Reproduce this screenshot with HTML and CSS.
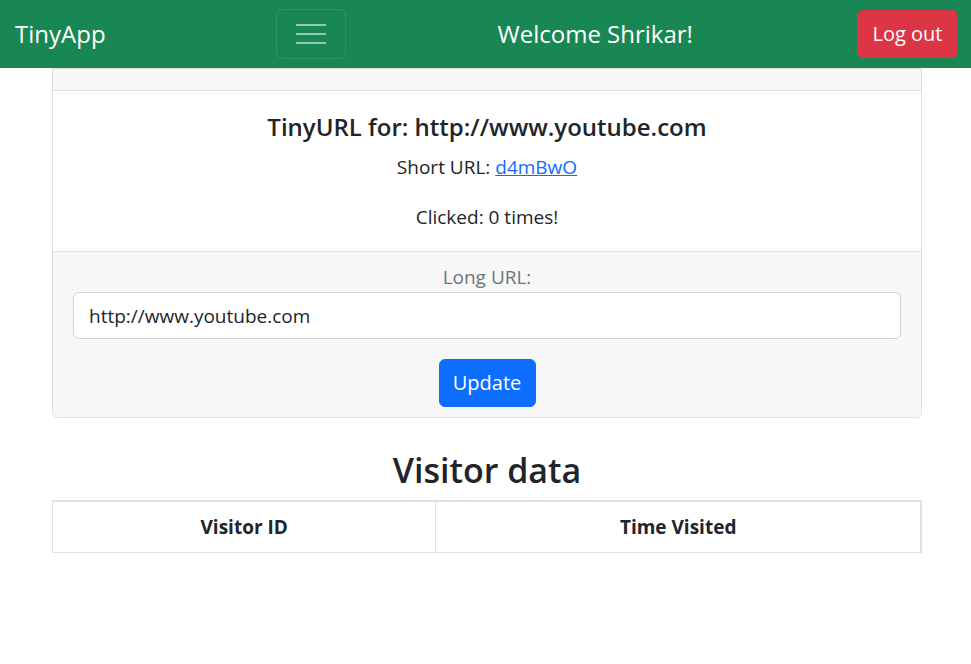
FILE: index.html
```html
<!DOCTYPE html>
<html lang="en">
<head>
<meta charset="utf-8">
<title>TinyApp</title>
<link rel="stylesheet" href="styles.css">
</head>
<body>
<nav class="navbar">
  <a class="brand" href="#">TinyApp</a>
  <button class="toggler" type="button" aria-label="Toggle navigation">
    <svg width="30" height="22" viewBox="0 0 30 22" aria-hidden="true">
      <path d="M0 2h30M0 11h30M0 20h30" stroke="rgba(255,255,255,0.55)" stroke-width="2.2" stroke-linecap="round"/>
    </svg>
  </button>
  <span class="welcome">Welcome Shrikar!</span>
  <button class="btn btn-danger" type="button">Log out</button>
</nav>

<main class="container">
  <section class="card">
    <div class="card-header"></div>
    <div class="card-body">
      <h5 class="card-title">TinyURL for: http://www.youtube.com</h5>
      <p class="card-text">Short URL: <a href="#">d4mBwO</a></p>
      <p class="card-text last">Clicked: 0 times!</p>
    </div>
    <form class="card-footer">
      <label class="form-label" for="longURL">Long URL:</label>
      <input class="form-control" id="longURL" type="text" value="http://www.youtube.com">
      <button class="btn btn-primary" type="button">Update</button>
    </form>
  </section>

  <h2 class="section-title">Visitor data</h2>
  <table class="table">
    <thead>
      <tr>
        <th class="col-id">Visitor ID</th>
        <th class="col-time">Time Visited</th>
      </tr>
    </thead>
  </table>
</main>
</body>
</html>
```
FILE: styles.css
```css
* { box-sizing: border-box; }

html, body {
  margin: 0;
  padding: 0;
  background: #fff;
}

body {
  font-family: "Open Sans", "Noto Sans", "Liberation Sans", sans-serif;
  font-size: 20px;
  line-height: 1.5;
  color: #212529;
}

.navbar {
  height: 68px;
  background: #198754;
  display: flex;
  align-items: center;
  justify-content: space-between;
  padding: 0 13px 0 15px;
}

.brand {
  color: #fff;
  text-decoration: none;
  font-size: 24px;
  line-height: 30px;
}

.toggler {
  width: 70px;
  height: 50px;
  margin-left: 18px;
  background: transparent;
  border: 1px solid rgba(255, 255, 255, 0.1);
  border-radius: 6px;
  display: flex;
  align-items: center;
  justify-content: center;
  padding: 0;
}

.toggler svg { display: block; }

.welcome {
  color: #fff;
  font-size: 24px;
  line-height: 30px;
  margin-right: 12px;
}

.btn {
  font-family: inherit;
  font-size: 20px;
  line-height: 30px;
  border: 1px solid transparent;
  border-radius: 6px;
  padding: 8px 16px;
  color: #fff;
  cursor: pointer;
}

.btn-danger {
  background: #dc3545;
  border-color: #dc3545;
  width: 101px;
  height: 48px;
  padding: 0;
}

.btn-primary {
  background: #0d6efd;
  border-color: #0d6efd;
  width: 97px;
  height: 48px;
  padding: 0;
  display: block;
  margin: 20px auto 0;
}

.container {
  width: 870px;
  margin: 0 0 0 52px;
}

.card {
  border: 1px solid #dfdfdf;
  border-radius: 0 0 6px 6px;
  background: #fff;
  overflow: hidden;
}

.card-header {
  height: 22px;
  background: #f7f7f7;
  border-bottom: 1px solid #dfdfdf;
}

.card-body {
  padding: 19px 20px 20px;
  text-align: center;
}

.card-title {
  margin: 0 0 9px;
  font-size: 24px;
  font-weight: 600;
  line-height: 34px;
}

.card-text {
  margin: 0 0 21px;
  font-size: 19px;
}

.card-text.last { margin-bottom: 0; }

.card-text a { color: #0d6efd; }

.card-footer {
  display: block;
  margin: 0;
  background: #f7f7f7;
  border-top: 1px solid #dfdfdf;
  padding: 10px 20px 10px;
  text-align: center;
}

.form-label {
  display: block;
  color: #6c757d;
  font-size: 19px;
  line-height: 30px;
}

.form-control {
  display: block;
  width: 100%;
  height: 47px;
  padding: 7px 15px;
  font-family: inherit;
  font-size: 19px;
  line-height: 30px;
  color: #212529;
  background: #fff;
  border: 1px solid #ced4da;
  border-radius: 6px;
}

.section-title {
  margin: 31px 0 9px;
  text-align: center;
  font-size: 34px;
  font-weight: 600;
  line-height: 42px;
}

.table {
  width: 870px;
  border-collapse: collapse;
  border-top: 2px solid #dee2e6;
  border-right: 2px solid #dee2e6;
}

.table th {
  border: 1px solid #dee2e6;
  padding: 10px;
  font-size: 19px;
  font-weight: 700;
  line-height: 30px;
  text-align: center;
}

.col-id { width: 384px; }
.col-time { width: 486px; }
```
